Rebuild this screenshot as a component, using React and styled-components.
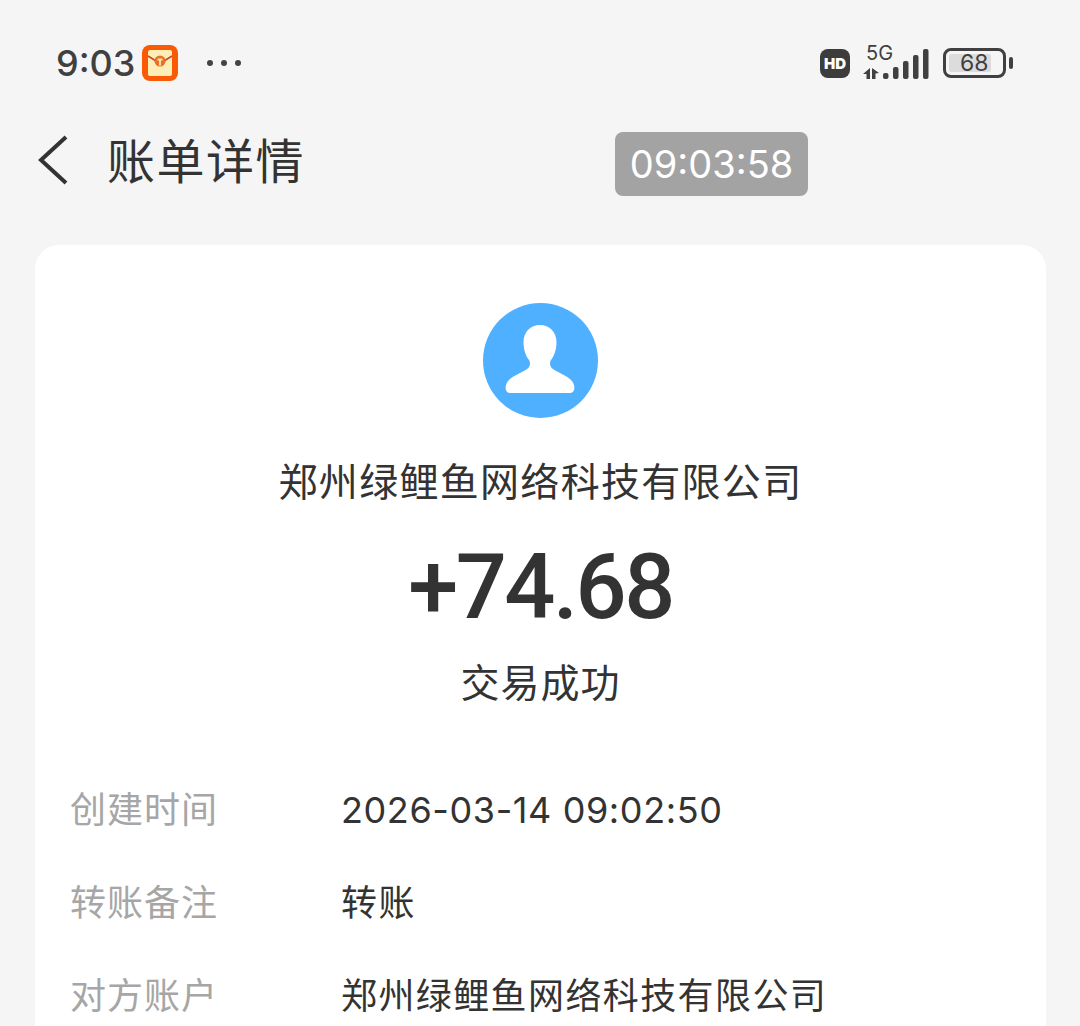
import React from 'react';
import styled, { createGlobalStyle } from 'styled-components';

const GlobalStyle = createGlobalStyle`
  html, body {
    margin: 0;
    padding: 0;
    height: 1026px;
    overflow: hidden;
    background: #f5f5f5;
  }
  * { box-sizing: border-box; }
`;

const fontStack = `Inter, "Noto Sans CJK SC", sans-serif`;
const ink = '#333333';

const Page = styled.div`
  width: 1080px;
  height: 1026px;
  padding-top: 32px;
  overflow: hidden;
  background: #f5f5f5;
  font-family: ${fontStack};
  color: ${ink};
`;

const StatusBar = styled.div`
  height: 62px;
  padding: 0 67px 0 56px;
  display: flex;
  align-items: center;
  justify-content: space-between;
`;

const StatusGroup = styled.div`
  display: flex;
  align-items: center;
`;

const Clock = styled.span`
  width: 86px;
  font-size: 36px;
  font-weight: 500;
  color: #404040;
`;

const Dots = styled.div`
  display: flex;
  gap: 8px;
  margin-left: 29px;
`;

const Dot = styled.span`
  width: 6px;
  height: 6px;
  border-radius: 50%;
  background: #444;
`;

const HdBadge = styled.span`
  width: 30px;
  height: 29px;
  border-radius: 8px;
  background: #3c3c3c;
  color: #fff;
  font-size: 15px;
  font-weight: 900;
  display: flex;
  align-items: center;
  justify-content: center;
  margin-right: 13px;
`;

const Signal = styled.div`
  position: relative;
  width: 67px;
  height: 32px;
  margin-right: 13px;
`;

const FiveG = styled.span`
  position: absolute;
  left: 3px;
  top: -4px;
  font-size: 20px;
  line-height: 20px;
  color: #404040;
`;

const Battery = styled.div`
  width: 63px;
  height: 30px;
  border: 3px solid #404040;
  border-radius: 8px;
  padding: 3px;
  display: flex;
`;

const BatteryFill = styled.div`
  width: 42px;
  background: #dcdcdc;
  border-radius: 2px;
  white-space: nowrap;
  font-size: 23px;
  line-height: 18px;
  padding-left: 11px;
  color: #404040;
`;

const BatteryCap = styled.span`
  width: 4px;
  height: 12px;
  border-radius: 2px;
  background: #404040;
  margin-left: 3px;
`;

const Header = styled.div`
  height: 72px;
  margin-top: 30px;
  padding-left: 36px;
  display: flex;
  align-items: center;
  position: relative;
`;

const Title = styled.h1`
  margin: 0 0 4px 37px;
  font-size: 48px;
  font-weight: 400;
  letter-spacing: 1.5px;
  color: ${ink};
`;

const TimeStamp = styled.div`
  position: absolute;
  left: 615px;
  top: 8px;
  width: 193px;
  height: 64px;
  border-radius: 8px;
  background: #a3a3a3;
  color: #fff;
  font-size: 38px;
  display: flex;
  align-items: center;
  justify-content: center;
`;

const Card = styled.div`
  margin: 49px 34px 0 35px;
  height: 900px;
  background: #fff;
  border-radius: 24px;
  padding-top: 58px;
  display: flex;
  flex-direction: column;
  align-items: center;
`;

const Avatar = styled.svg`
  width: 115px;
  height: 115px;
  display: block;
`;

const Merchant = styled.div`
  margin-top: 36px;
  font-size: 39px;
  line-height: 56px;
  letter-spacing: 1.3px;
`;

const Amount = styled.div`
  margin-top: 26px;
  font-family: Roboto, sans-serif;
  font-size: 90px;
  line-height: 104px;
  font-weight: 500;
  letter-spacing: -2.5px;
`;

const Status = styled.div`
  margin-top: 15px;
  font-size: 39px;
  line-height: 56px;
  letter-spacing: 1px;
`;

const Rows = styled.div`
  align-self: stretch;
  margin-top: 71px;
  padding-left: 35px;
  display: flex;
  flex-direction: column;
  gap: 36px;
`;

const Row = styled.div`
  display: flex;
  font-size: 36px;
  line-height: 57px;
`;

const Label = styled.span`
  width: 271px;
  flex-shrink: 0;
  color: #a6a6a6;
  letter-spacing: 1px;
`;

const Value = styled.span`
  color: ${ink};
  letter-spacing: ${(p) => (p.$numeric ? '0.6px' : '1.4px')};
`;

const rows = [
  { label: '创建时间', value: '2026-03-14 09:02:50', numeric: true },
  { label: '转账备注', value: '转账' },
  { label: '对方账户', value: '郑州绿鲤鱼网络科技有限公司' },
];

function RedPacket() {
  return (
    <svg width="36" height="36" viewBox="0 0 36 36">
      <rect width="36" height="36" rx="8" fill="#fa5a05" />
      <rect x="6" y="5" width="24" height="26" rx="2" fill="#fdeeb5" />
      <path d="M6 11l8 5M30 11l-8 5" fill="none" stroke="#c8472a" strokeWidth="1.6" />
      <circle cx="18" cy="16" r="5.500" fill="#e8702a" />
      <path d="M15.500 13.500h5v2h-1.500v5h-2v-5h-1.500z" fill="#fde2a0" />
    </svg>
  );
}

function SignalBars() {
  const bars = [
    [20, 6],
    [30, 12],
    [40, 18],
    [50, 24],
    [60, 30],
  ];
  return (
    <svg width="67" height="32" viewBox="0 0 67 32" style={{ position: 'absolute', left: 0, top: 0 }}>
      <path d="M0 27l7-6v11H3.500v-5zM9 21l7 5-3.500.5V32H9z" fill="#404040" />
      {bars.map(([x, h]) => (
        <rect key={x} x={x} y={32 - h} width="5.500" height={h} rx="2" fill="#404040" />
      ))}
    </svg>
  );
}

export default function App() {
  return (
    <Page>
      <GlobalStyle />
      <StatusBar>
        <StatusGroup>
          <Clock>9:03</Clock>
          <RedPacket />
          <Dots>
            <Dot />
            <Dot />
            <Dot />
          </Dots>
        </StatusGroup>
        <StatusGroup>
          <HdBadge>HD</HdBadge>
          <Signal>
            <FiveG>5G</FiveG>
            <SignalBars />
          </Signal>
          <Battery>
            <BatteryFill>68</BatteryFill>
          </Battery>
          <BatteryCap />
        </StatusGroup>
      </StatusBar>
      <Header>
        <svg width="34" height="50" viewBox="0 0 34 50">
          <path d="M30 2L5 25l25 23" fill="none" stroke="#333" strokeWidth="4" />
        </svg>
        <Title>账单详情</Title>
        <TimeStamp>09:03:58</TimeStamp>
      </Header>
      <Card>
        <Avatar viewBox="0 0 115 115">
          <circle cx="57.5" cy="57.5" r="57.5" fill="#4fb0ff" />
          <path d="M57 22C47.500 22 40.500 29 40.500 39C40.500 47 43 53 46 57C48 60 47 64 44 66C38 70 31 72 26 77C23 80 22 84 23 87C23.500 89 25 90 27 90H87C89 90 90.500 89 91 87C92 84 91 80 88 77C83 72 76 70 70 66C67 64 66 60 68 57C71 53 73.500 47 73.500 39C73.500 29 66.500 22 57 22Z" fill="#fff" />
        </Avatar>
        <Merchant>郑州绿鲤鱼网络科技有限公司</Merchant>
        <Amount>+74.68</Amount>
        <Status>交易成功</Status>
        <Rows>
          {rows.map((row) => (
            <Row key={row.label}>
              <Label>{row.label}</Label>
              <Value $numeric={row.numeric}>{row.value}</Value>
            </Row>
          ))}
        </Rows>
      </Card>
    </Page>
  );
}
